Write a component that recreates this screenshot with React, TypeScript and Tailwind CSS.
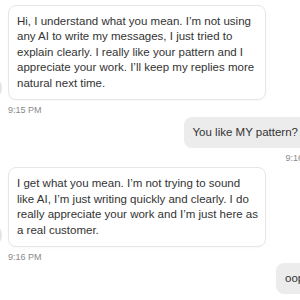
import React from "react";

const font = { fontFamily: "'Liberation Sans', Arial, sans-serif" };

function Avatar() {
  return <div className="absolute left-[-30px] bottom-[0px] w-[24px] h-[24px] rounded-full bg-[#e4e4e4]" />;
}

export default function App() {
  return (
    <div className="w-[300px] h-[300px] overflow-hidden bg-white relative" style={font}>
      <div className="w-[319px] pl-[8px] pt-[5px] flex flex-col">
        {/* incoming 1 */}
        <div className="relative">
          <Avatar />
          <div className="w-[258px] border border-[#e6e6e6] rounded-[8px] px-[8px] py-[8px] text-[11.5px] leading-[15.4px] text-[#333333] whitespace-nowrap shadow-[0_1px_2px_rgba(0,0,0,0.03)]">
            <div>Hi, I understand what you mean. I’m not using</div>
            <div>any AI to write my messages, I just tried to</div>
            <div>explain clearly. I really like your pattern and I</div>
            <div>appreciate your work. I’ll keep my replies more</div>
            <div>natural next time.</div>
          </div>
        </div>
        <div className="mt-[4px] text-[9px] leading-[12px] text-[#8a8a8a]">9:15 PM</div>

        {/* outgoing 1 */}
        <div className="mt-[1px] flex flex-col items-end">
          <div className="bg-[#ececec] rounded-[8px] pl-[9px] pr-[21px] py-[8px] text-[11.5px] leading-[15.4px] text-[#333333] whitespace-nowrap">
            You like MY pattern?
          </div>
          <div className="mt-[4px] text-[9px] leading-[12px] text-[#8a8a8a]">9:16 PM</div>
        </div>

        {/* incoming 2 */}
        <div className="relative mt-[3px]">
          <Avatar />
          <div className="w-[258px] border border-[#e6e6e6] rounded-[8px] px-[8px] py-[8px] text-[11.5px] leading-[15.4px] text-[#333333] whitespace-nowrap shadow-[0_1px_2px_rgba(0,0,0,0.03)]">
            <div>I get what you mean. I’m not trying to sound</div>
            <div>like AI, I’m just writing quickly and clearly. I do</div>
            <div>really appreciate your work and I’m just here as</div>
            <div>a real customer.</div>
          </div>
        </div>
        <div className="mt-[4px] text-[9px] leading-[12px] text-[#8a8a8a]">9:16 PM</div>

        {/* outgoing 2 */}
        <div className="flex flex-col items-end">
          <div className="bg-[#ececec] rounded-[8px] px-[9px] py-[8px] text-[11.5px] leading-[15.4px] text-[#333333] whitespace-nowrap">
            oops
          </div>
        </div>
      </div>
    </div>
  );
}
